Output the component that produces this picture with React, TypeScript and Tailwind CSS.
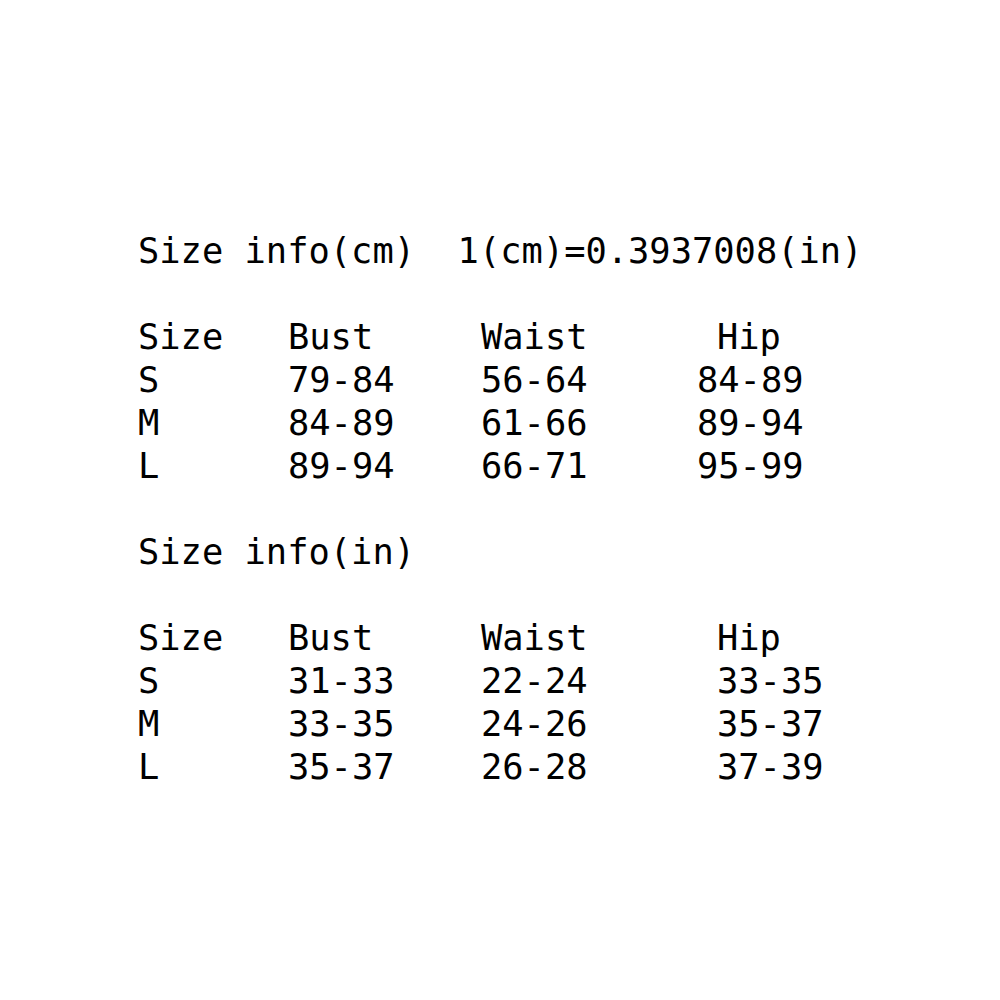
import React from 'react';

type Row = { size: string; bust: string; waist: string; hip: string; shift?: boolean };

const cmRows: Row[] = [
  { size: 'Size', bust: 'Bust', waist: 'Waist', hip: 'Hip', shift: true },
  { size: 'S', bust: '79-84', waist: '56-64', hip: '84-89' },
  { size: 'M', bust: '84-89', waist: '61-66', hip: '89-94' },
  { size: 'L', bust: '89-94', waist: '66-71', hip: '95-99' },
];

const inRows: Row[] = [
  { size: 'Size', bust: 'Bust', waist: 'Waist', hip: 'Hip', shift: true },
  { size: 'S', bust: '31-33', waist: '22-24', hip: '33-35', shift: true },
  { size: 'M', bust: '33-35', waist: '24-26', hip: '35-37', shift: true },
  { size: 'L', bust: '35-37', waist: '26-28', hip: '37-39', shift: true },
];

const SizeTable = ({ rows }: { rows: Row[] }) => (
  <div className="flex flex-col">
    {rows.map((r, i) => (
      <div key={i} className="flex h-[43px] items-center whitespace-pre">
        <span className="w-[150px]">{r.size}</span>
        <span className="w-[193px]">{r.bust}</span>
        <span className="w-[216px]">{r.waist}</span>
        <span className={r.shift ? 'pl-[20px]' : ''}>{r.hip}</span>
      </div>
    ))}
  </div>
);

export default function App() {
  return (
    <div
      className="w-[1000px] h-[1000px] bg-white text-black pl-[138px] pt-[229px] text-[35.4px] leading-[43px]"
      style={{ fontFamily: '"DejaVu Sans Mono", "Liberation Mono", monospace' }}
    >
      <div className="h-[43px] whitespace-pre">Size info(cm)  1(cm)=0.3937008(in)</div>
      <div className="h-[43px]" />
      <SizeTable rows={cmRows} />
      <div className="h-[43px]" />
      <div className="h-[43px] whitespace-pre">Size info(in)</div>
      <div className="h-[43px]" />
      <SizeTable rows={inRows} />
    </div>
  );
}
